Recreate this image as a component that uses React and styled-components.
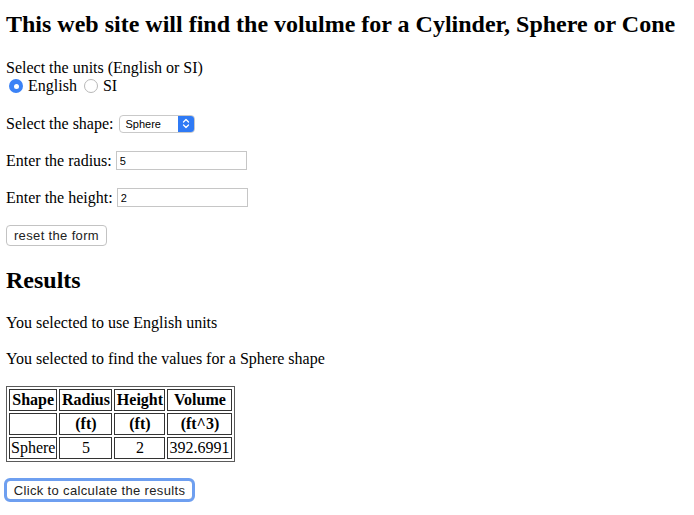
import styled, { createGlobalStyle } from "styled-components"

const GlobalStyle = createGlobalStyle`
    html, body {
        margin: 0;
        padding: 0;
        background: #fff;
    }
    body {
        font-family: "Liberation Serif", "Times New Roman", serif;
        font-size: 16px;
        line-height: 18px;
        color: #000;
    }
`

const results = [
    { shape: "Sphere", radius: "5", height: "2", volume: "392.6991" },
]

export default function App() {
    return (
        <Page>
            <GlobalStyle />
            <Title>This web site will find the volulme for a Cylinder, Sphere or Cone</Title>

            <Units>
                <div>Select the units (English or SI)</div>
                <RadioRow>
                    <Radio $checked />
                    <span>English</span>
                    <Radio />
                    <span>SI</span>
                </RadioRow>
            </Units>

            <FieldRow $first>
                <span>Select the shape:</span>
                <SelectBox>
                    <SelectText>Sphere</SelectText>
                    <SelectArrow>
                        <svg width="8" height="11" viewBox="0 0 8 11" fill="none">
                            <path d="M1.5 4 L4 1.5 L6.5 4" stroke="#fff" strokeWidth="1.3" strokeLinecap="round" strokeLinejoin="round" />
                            <path d="M1.5 7 L4 9.5 L6.5 7" stroke="#fff" strokeWidth="1.3" strokeLinecap="round" strokeLinejoin="round" />
                        </svg>
                    </SelectArrow>
                </SelectBox>
            </FieldRow>

            <FieldRow>
                <span>Enter the radius:</span>
                <TextInput defaultValue="5" />
            </FieldRow>

            <FieldRow>
                <span>Enter the height:</span>
                <TextInput defaultValue="2" />
            </FieldRow>

            <ResetButton>reset the form</ResetButton>

            <Heading>Results</Heading>

            <Para $gap={20}>You selected to use English units</Para>
            <Para $gap={18}>You selected to find the values for a Sphere shape</Para>

            <ResultTable>
                <tbody>
                    <tr>
                        <Th $w={44}>Shape</Th>
                        <Th $w={49}>Radius</Th>
                        <Th $w={47}>Height</Th>
                        <Th $w={61}>Volume</Th>
                    </tr>
                    <tr>
                        <Th></Th>
                        <Th>(ft)</Th>
                        <Th>(ft)</Th>
                        <Th>(ft^3)</Th>
                    </tr>
                    {results.map((r) => (
                        <tr key={r.shape}>
                            <Td>{r.shape}</Td>
                            <Td $center>{r.radius}</Td>
                            <Td $center>{r.height}</Td>
                            <Td>{r.volume}</Td>
                        </tr>
                    ))}
                </tbody>
            </ResultTable>

            <CalcButton>Click to calculate the results</CalcButton>
        </Page>
    )
}

const Page = styled.div`
    display: flex;
    flex-direction: column;
    align-items: flex-start;
    padding: 10px 6px 20px;
`

const Title = styled.h1`
    margin: 0;
    font-size: 24px;
    line-height: 28px;
    font-weight: bold;
    white-space: nowrap;
`

const Units = styled.div`
    margin-top: 21px;
`

const RadioRow = styled.div`
    display: flex;
    align-items: center;
    height: 18px;
`

const Radio = styled.span`
    box-sizing: border-box;
    width: 14px;
    height: 14px;
    border-radius: 50%;
    margin: 0 5px 0 ${(p) => (p.$checked ? "3px" : "7px")};
    border: ${(p) => (p.$checked ? "none" : "1px solid #b8b8b8")};
    background: ${(p) => (p.$checked ? "#3b82f6" : "#fff")};
    display: flex;
    align-items: center;
    justify-content: center;

    &::after {
        content: "";
        display: ${(p) => (p.$checked ? "block" : "none")};
        width: 5px;
        height: 5px;
        border-radius: 50%;
        background: #fff;
    }
`

const FieldRow = styled.div`
    display: flex;
    align-items: center;
    gap: 4px;
    height: 19px;
    margin-top: ${(p) => (p.$first ? "19px" : "18px")};
`

const SelectBox = styled.div`
    box-sizing: border-box;
    display: flex;
    align-items: stretch;
    width: 76px;
    height: 18px;
    margin-left: 1px;
    border: 1px solid #c9c9c9;
    border-radius: 4px;
    overflow: hidden;
    background: #fff;
`

const SelectText = styled.span`
    flex: 1;
    padding-left: 6px;
    font-family: "Liberation Sans", Arial, sans-serif;
    font-size: 11px;
    line-height: 16px;
`

const SelectArrow = styled.span`
    width: 16px;
    background: #2f7af5;
    display: flex;
    align-items: center;
    justify-content: center;
`

const TextInput = styled.input`
    box-sizing: border-box;
    width: 131px;
    height: 19px;
    padding: 0 3px;
    border: 1px solid #c6c6c6;
    font-family: "Liberation Sans", Arial, sans-serif;
    font-size: 11px;
    color: #000;
    outline: none;
`

const ResetButton = styled.button`
    box-sizing: border-box;
    margin-top: 18px;
    height: 21px;
    width: 101px;
    padding: 0;
    background: #fff;
    border: 1px solid #c3c3c3;
    border-radius: 4px;
    font-family: "Liberation Sans", Arial, sans-serif;
    font-size: 13px;
    letter-spacing: 0.35px;
    color: #222;
`

const Heading = styled.h2`
    margin: 20px 0 0;
    font-size: 24px;
    line-height: 28px;
    font-weight: bold;
`

const Para = styled.p`
    margin: ${(p) => p.$gap}px 0 0;
`

const ResultTable = styled.table`
    margin-top: 18px;
    border: 1px solid #5a5a5a;
    border-spacing: 2px;
`

const Th = styled.th`
    border: 1px solid #333;
    padding: 1px;
    font-weight: bold;
    text-align: center;
    ${(p) => (p.$w ? `width: ${p.$w}px;` : "")}
`

const Td = styled.td`
    border: 1px solid #333;
    padding: 1px;
    text-align: ${(p) => (p.$center ? "center" : "left")};
`

const CalcButton = styled.button`
    box-sizing: border-box;
    margin-top: 18px;
    height: 20px;
    width: 187px;
    padding: 0;
    background: #fff;
    border: 1px solid #c3c3c3;
    border-radius: 4px;
    outline: 3px solid #6e9ff0;
    outline-offset: -1px;
    font-family: "Liberation Sans", Arial, sans-serif;
    font-size: 13px;
    letter-spacing: 0.35px;
    color: #222;
`
